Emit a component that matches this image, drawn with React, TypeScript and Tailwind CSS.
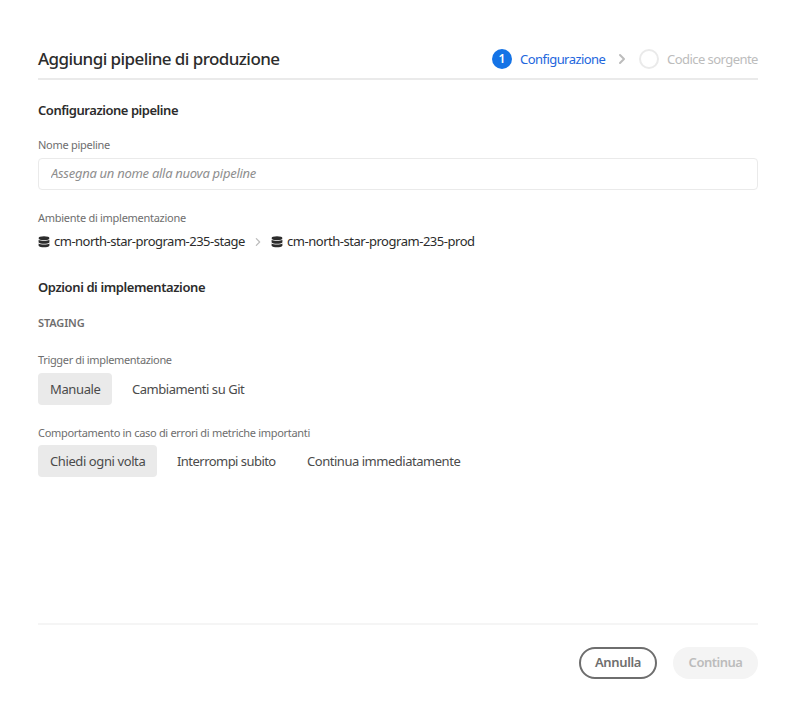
function StackIcon() {
  return (
    <svg className="-mt-px h-3 w-3 shrink-0" viewBox="0 0 12 12" fill="#2c2c2c">
      <ellipse cx="6" cy="2.200" rx="5.400" ry="1.900" />
      <path d="M.6 3.700C2.200 5.100 9.800 5.100 11.400 3.700V6.400C10.200 8.200 1.800 8.200.6 6.400Z" />
      <path d="M.6 7.400C2.200 8.900 9.800 8.900 11.400 7.400V9.800C10.200 11.800 1.800 11.800.6 9.800Z" />
    </svg>
  );
}

function Chevron({ className, weight }: { className: string; weight: number }) {
  return (
    <svg
      className={className}
      viewBox="0 0 8 12"
      fill="none"
      stroke="currentColor"
      strokeWidth={weight}
      strokeLinecap="round"
      strokeLinejoin="round"
    >
      <path d="M2 2l4 4-4 4" />
    </svg>
  );
}

export default function App() {
  return (
    <main className="flex h-[715px] w-[797px] flex-col bg-white pt-[42px] pr-[39px] pl-[38px] font-['Noto_Sans',sans-serif] text-[13px] whitespace-nowrap text-[#2c2c2c]">
      <header className="flex h-[38px] shrink-0 items-start justify-between border-b-2 border-[#eaeaea]">
        <h1 className="text-[17px] leading-[34px] font-medium tracking-[-0.57px]">Aggiungi pipeline di produzione</h1>
        <div className="flex h-[34px] items-center">
          <span className="flex size-5 items-center justify-center rounded-full bg-[#1473e6] text-xs font-semibold text-white">
            1
          </span>
          <span className="ml-2 w-[86px] pt-px tracking-[-0.55px] text-[#2266dd]">Configurazione</span>
          <Chevron className="ml-3 h-3 w-2 text-[#bcbcbc]" weight={2} />
          <span className="ml-[13px] size-5 rounded-full border-2 border-[#eaeaea]" />
          <span className="ml-2 w-[91px] pt-px tracking-[-0.55px] text-[#bcbcbc]">Codice sorgente</span>
        </div>
      </header>

      <h2 className="mt-5 leading-5 font-semibold tracking-[-0.46px]">Configurazione pipeline</h2>

      <label className="mt-4 text-[11px] leading-[18px] tracking-[-0.28px] text-[#6e6e6e]" htmlFor="name">
        Nome pipeline
      </label>
      <input
        id="name"
        className="mt-1 h-8 w-full shrink-0 rounded border border-[#eaeaea] px-3 pb-0.5 tracking-[-0.28px] outline-none placeholder:text-[#8e8e8e] placeholder:italic"
        placeholder="Assegna un nome alla nuova pipeline"
      />

      <div className="mt-[19px] text-[11px] leading-[18px] tracking-[-0.28px] text-[#6e6e6e]">Ambiente di implementazione</div>
      <div className="mt-[5px] flex h-5 items-center">
        <StackIcon />
        <span className="ml-1 w-[191px] tracking-[-0.5px]">cm-north-star-program-235-stage</span>
        <Chevron className="ml-[9px] h-2.5 w-2 text-[#bcbcbc]" weight={1.5} />
        <span className="ml-[9px] flex items-center">
          <StackIcon />
          <span className="ml-1 tracking-[-0.47px]">cm-north-star-program-235-prod</span>
        </span>
      </div>

      <h2 className="mt-[25px] leading-5 font-semibold tracking-[-0.4px]">Opzioni di implementazione</h2>
      <h3 className="mt-[17px] text-[11px] leading-[18px] font-semibold tracking-[-0.14px] text-[#6e6e6e]">STAGING</h3>

      <div className="mt-[19px] text-[11px] leading-[18px] tracking-[-0.34px] text-[#6e6e6e]">Trigger di implementazione</div>
      <div className="mt-1 flex h-8 items-center text-[#4b4b4b]">
        <button className="h-8 w-[74px] rounded bg-[#eaeaea] pt-0.5 pl-3 text-left tracking-[-0.38px]">Manuale</button>
        <button className="ml-2 h-8 px-3 pt-0.5 tracking-[-0.45px]">Cambiamenti su Git</button>
      </div>

      <div className="mt-[19px] text-[11px] leading-[18px] tracking-[-0.3px] text-[#6e6e6e]">
        Comportamento in caso di errori di metriche importanti
      </div>
      <div className="mt-[3px] flex h-8 items-center text-[#4b4b4b]">
        <button className="h-8 w-[119px] rounded bg-[#eaeaea] pt-0.5 pl-3 text-left tracking-[-0.4px]">Chiedi ogni volta</button>
        <button className="ml-2 h-8 w-[122px] pt-0.5 pl-3 text-left tracking-[-0.54px]">Interrompi subito</button>
        <button className="ml-2 h-8 pt-0.5 pl-3 text-left tracking-[-0.47px]">Continua immediatamente</button>
      </div>

      <footer className="mt-auto mb-[36px] flex h-[56px] shrink-0 items-end justify-end gap-4 border-t-2 border-[#f5f5f5] font-semibold">
        <button className="h-8 w-[78px] rounded-full border-2 border-[#6e6e6e] tracking-[-0.34px] text-[#6e6e6e]">Annulla</button>
        <button className="h-8 w-[85px] rounded-full bg-[#f4f4f4] tracking-[-0.5px] text-[#bcbcbc]">Continua</button>
      </footer>
    </main>
  );
}
